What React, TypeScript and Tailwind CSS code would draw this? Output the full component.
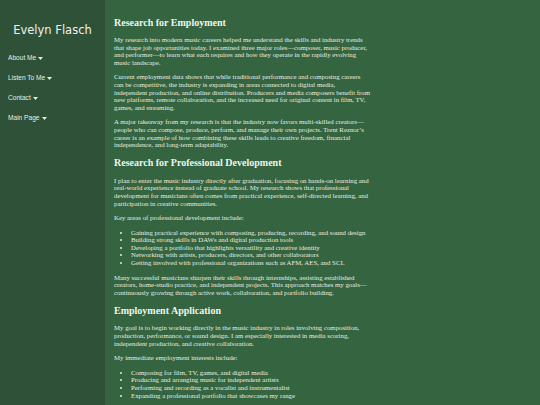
const navItems = ['About Me', 'Listen To Me', 'Contact', 'Main Page'];

function Caret() {
  return (
    <svg width="5" height="3" viewBox="0 0 10 6" className="inline-block ml-[2px] align-middle">
      <path d="M0 0h10L5 6z" fill="currentColor" />
    </svg>
  );
}

export default function App() {
  return (
    <div className="flex min-h-screen bg-[#356440] text-[#e6ede2]">
      {/* Sidebar */}
      <aside className="w-[105px] shrink-0 bg-[#2f5137] min-h-screen">
        <h1 className="text-center text-[11.5px] pt-[22px] font-['Comic_Sans_MS','DejaVu_Sans',sans-serif] text-[#eef2ec]">
          Evelyn Flasch
        </h1>
        <nav className="mt-[15px] pl-[8px] flex flex-col gap-[11.5px] font-['Liberation_Sans',Arial,sans-serif] text-[6.6px]">
          {navItems.map((item) => (
            <div key={item} className="leading-[8.5px]">
              {item}
              <Caret />
            </div>
          ))}
        </nav>
      </aside>

      {/* Main */}
      <main className="flex-1 pl-[9px] pt-[8px] font-['Liberation_Serif','Times_New_Roman',serif] text-[6.8px] leading-[7.6px]">
        <div className="w-[256px]">
          <h2 className="text-[10px] leading-[11.5px] font-bold mt-[8.5px] mb-[8px] text-[#f0f4ee]">Research for Employment</h2>
          <p className="mb-[7px]">
            My research into modern music careers helped me understand the skills and industry trends that shape job
            opportunities today. I examined three major roles—composer, music producer, and performer—to learn what each
            requires and how they operate in the rapidly evolving music landscape.
          </p>
          <p className="mb-[7px]">
            Current employment data shows that while traditional performance and composing careers can be competitive,
            the industry is expanding in areas connected to digital media, independent production, and online
            distribution. Producers and media composers benefit from new platforms, remote collaboration, and the
            increased need for original content in film, TV, games, and streaming.
          </p>
          <p className="mb-[7px]">
            A major takeaway from my research is that the industry now favors multi-skilled creators—people who can
            compose, produce, perform, and manage their own projects. Trent Reznor’s career is an example of how
            combining these skills leads to creative freedom, financial independence, and long-term adaptability.
          </p>

          <h2 className="text-[10px] leading-[11.5px] font-bold mt-[8.5px] mb-[8px] text-[#f0f4ee]">Research for Professional Development</h2>
          <p className="mb-[7px]">
            I plan to enter the music industry directly after graduation, focusing on hands-on learning and real-world
            experience instead of graduate school. My research shows that professional development for musicians often
            comes from practical experience, self-directed learning, and participation in creative communities.
          </p>
          <p className="mb-[7px]">Key areas of professional development include:</p>
          <ul className="list-disc pl-[17px] mb-[7px]">
            <li>Gaining practical experience with composing, producing, recording, and sound design</li>
            <li>Building strong skills in DAWs and digital production tools</li>
            <li>Developing a portfolio that highlights versatility and creative identity</li>
            <li>Networking with artists, producers, directors, and other collaborators</li>
            <li>Getting involved with professional organizations such as AFM, AES, and SCL</li>
          </ul>
          <p className="mb-[7px]">
            Many successful musicians sharpen their skills through internships, assisting established creators,
            home-studio practice, and independent projects. This approach matches my goals—continuously growing through
            active work, collaboration, and portfolio building.
          </p>

          <h2 className="text-[10px] leading-[11.5px] font-bold mt-[8.5px] mb-[8px] text-[#f0f4ee]">Employment Application</h2>
          <p className="mb-[7px]">
            My goal is to begin working directly in the music industry in roles involving composition, production,
            performance, or sound design. I am especially interested in media scoring, independent production, and
            creative collaboration.
          </p>
          <p className="mb-[7px]">My immediate employment interests include:</p>
          <ul className="list-disc pl-[17px] mb-[7px]">
            <li>Composing for film, TV, games, and digital media</li>
            <li>Producing and arranging music for independent artists</li>
            <li>Performing and recording as a vocalist and instrumentalist</li>
            <li>Expanding a professional portfolio that showcases my range</li>
          </ul>
        </div>
      </main>
    </div>
  );
}
